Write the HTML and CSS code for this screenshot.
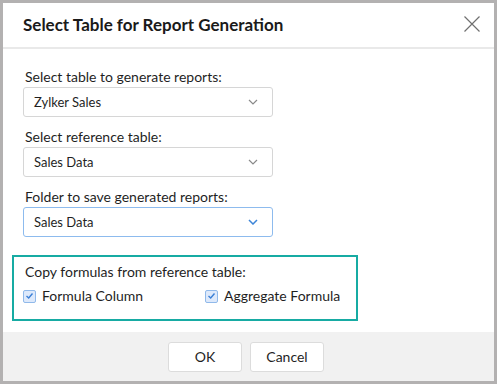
FILE: index.html
```html
<!DOCTYPE html>
<html>
<head>
<meta charset="utf-8">
<link rel="stylesheet" href="styles.css">
</head>
<body>
<div class="dialog">
  <div class="header">
    <div class="title">Select Table for Report Generation</div>
    <svg class="close" width="16" height="16" viewBox="0 0 16 16"><path d="M0.5 0.5L15.5 15.5M15.5 0.5L0.5 15.5" stroke="#707070" stroke-width="1.2" fill="none"/></svg>
  </div>
  <div class="body">
    <div class="field">
      <div class="label">Select table to generate reports:</div>
      <div class="select"><span>Zylker Sales</span><svg class="chev" width="10" height="6" viewBox="0 0 10 6"><path d="M1 1L5 5L9 1" stroke="#8a8a8a" stroke-width="1.2" fill="none"/></svg></div>
    </div>
    <div class="field">
      <div class="label">Select reference table:</div>
      <div class="select"><span>Sales Data</span><svg class="chev" width="10" height="6" viewBox="0 0 10 6"><path d="M1 1L5 5L9 1" stroke="#8a8a8a" stroke-width="1.2" fill="none"/></svg></div>
    </div>
    <div class="field">
      <div class="label">Folder to save generated reports:</div>
      <div class="select focus"><span>Sales Data</span><svg class="chev" width="10" height="6" viewBox="0 0 10 6"><path d="M1 1L5 5L9 1" stroke="#3d85d8" stroke-width="1.5" fill="none"/></svg></div>
    </div>
    <div class="copybox">
      <div class="label">Copy formulas from reference table:</div>
      <div class="checks">
        <label class="check first"><span class="box"><svg width="9" height="8" viewBox="0 0 9 8"><path d="M1.5 4L3.7 6L7.5 1.5" stroke="#3a7fd6" stroke-width="1.4" fill="none"/></svg></span>Formula Column</label>
        <label class="check"><span class="box"><svg width="9" height="8" viewBox="0 0 9 8"><path d="M1.5 4L3.7 6L7.5 1.5" stroke="#3a7fd6" stroke-width="1.4" fill="none"/></svg></span>Aggregate Formula</label>
      </div>
    </div>
  </div>
  <div class="footer">
    <button class="btn">OK</button>
    <button class="btn">Cancel</button>
  </div>
</div>
</body>
</html>
```

FILE: styles.css
```css
* { box-sizing: border-box; }
html, body { margin: 0; padding: 0; background: #ffffff; }
body { font-family: Lato, "Open Sans", sans-serif; color: #1f1f1f; }

.dialog {
  width: 497px;
  height: 384px;
  border: 3px solid #b3b1b1;
  display: flex;
  flex-direction: column;
  background: #fff;
}

.header {
  height: 46px;
  border-bottom: 2px solid #e9e9e9;
  display: flex;
  align-items: center;
  justify-content: space-between;
  padding: 0 14px 0 20px;
  flex-shrink: 0;
}
.title {
  font-size: 17px;
  font-weight: 700;
  color: #1a1a1a;
  padding-bottom: 1px;
}
.close { margin-top: -2px; }

.body {
  flex: 1;
  padding: 18px 0 0 20px;
}

.field { margin-bottom: 10px; }
.label {
  font-size: 14px;
  line-height: 20px;
  padding-left: 2px;
  color: #1f1f1f;
}
.select {
  width: 250px;
  height: 30px;
  border: 1px solid #d6d6d6;
  border-radius: 3px;
  display: flex;
  align-items: center;
  justify-content: space-between;
  padding: 0 14px 0 10px;
  font-size: 13px;
  color: #1f1f1f;
}
.select.focus { border-color: #8dbbee; }

.copybox {
  margin: 18px 0 0 -11px;
  width: 346px;
  height: 66px;
  border: 2px solid #17aba3;
  padding: 5px 0 0 9px;
}
.checks {
  display: flex;
  margin-top: 4px;
}
.check {
  display: flex;
  align-items: center;
  font-size: 14px;
  line-height: 20px;
  flex-shrink: 0;
}
.check.first { width: 182px; }
.box {
  width: 13px;
  height: 13px;
  border: 1px solid #90b9ea;
  background: #dde9fb;
  border-radius: 2px;
  margin-right: 6px;
  display: flex;
  align-items: center;
  justify-content: center;
}

.footer {
  height: 49px;
  background: #f1f1f1;
  display: flex;
  justify-content: center;
  align-items: center;
  gap: 8px;
  flex-shrink: 0;
  padding-right: 5px;
}
.btn {
  width: 74px;
  height: 30px;
  background: #fff;
  border: 1px solid #dcdcdc;
  border-radius: 3px;
  font-family: Lato, "Open Sans", sans-serif;
  font-size: 14px;
  color: #1f1f1f;
  padding: 0;
}
```
